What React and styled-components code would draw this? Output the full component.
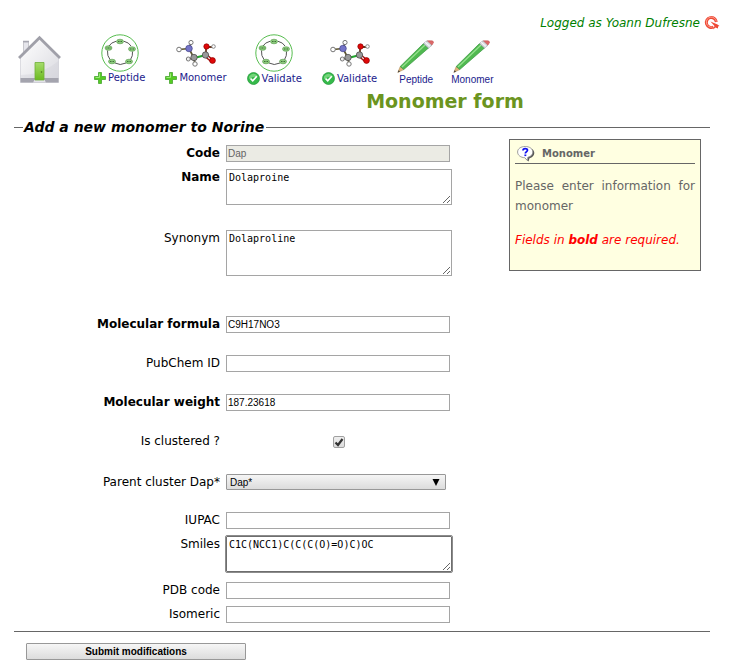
import React from "react";
import styled, { createGlobalStyle } from "styled-components";

const GlobalStyle = createGlobalStyle`
  *, *::before, *::after { box-sizing: border-box; }
  body {
    margin: 0;
    background: #fff;
    color: #000;
    font: 12px/24px "DejaVu Sans", Verdana, sans-serif;
  }
`;

const Page = styled.div`
  padding: 13px 26px 8px 14px;
`;

const UserBar = styled.div`
  display: flex;
  justify-content: flex-end;
  align-items: center;
  gap: 4px;
  height: 20px;
  margin-right: -10px;
  color: #008000;
  font-style: italic;
`;

const IconButton = styled.button`
  display: flex;
  padding: 0;
  border: 0;
  background: none;
  cursor: pointer;
`;

const Nav = styled.nav`
  display: flex;
  align-items: flex-start;
  gap: 20px;
  padding: 1px 3px 0;
`;

const EditLinks = styled.div`
  display: flex;
  gap: 16px;
`;

const HomeLink = styled.a`
  display: flex;
  margin-right: 12px;
  padding-top: 1px;
`;

const NavLink = styled.a`
  display: flex;
  flex-direction: column;
  align-items: center;
  color: #1a1a8c;
  font: 10px/12px ${(p) => (p.$edit ? '"Liberation Sans", Arial' : '"DejaVu Sans", Verdana')}, sans-serif;
  text-decoration: none;
`;

const Figure = styled.span`
  display: flex;
  align-items: ${(p) => (p.$edit ? "flex-end" : "center")};
  height: ${(p) => (p.$edit ? 40 : 38)}px;
`;

const Caption = styled.span`
  display: flex;
  align-items: center;
  gap: 2px;
`;

const Title = styled.h1`
  margin: 4px 0 0;
  padding-left: 166px;
  color: #6b9420;
  font-size: 19px;
  line-height: 22px;
  text-align: center;
`;

const Fieldset = styled.fieldset`
  margin: 5px 0 0;
  padding: 4px 9px 5px 0;
  border: solid #666;
  border-width: 1px 0;
  min-width: 0;
`;

const Legend = styled.legend`
  margin-left: 9px;
  padding: 0 2px 0 1px;
  font-size: 14px;
  font-weight: bold;
  font-style: italic;
  line-height: 20px;
`;

const Columns = styled.div`
  display: flex;
  align-items: flex-start;
  gap: 16px;
`;

const Fields = styled.div`
  flex: 1;
`;

const Row = styled.div`
  display: grid;
  grid-template-columns: 206px 226px;
  column-gap: 6px;
  margin-bottom: ${(p) => p.$after || 0}px;
`;

const Label = styled.label`
  text-align: right;
  font-weight: ${(p) => (p.$required ? "bold" : "normal")};
`;

const TextInput = styled.input`
  width: 224px;
  height: 17px;
  margin-top: 4px;
  padding: 0 1px;
  border: 1px solid #a5a5a5;
  border-radius: 0;
  background: #fff;
  color: #000;
  font: 10px/15px "Liberation Sans", Arial, sans-serif;
  outline: none;

  &:disabled {
    background: #ebebe4;
    color: #646464;
  }
`;

const TextArea = styled.textarea`
  display: block;
  width: 226px;
  height: ${(p) => (p.$tall ? 46 : 36)}px;
  margin-top: 4px;
  padding: 2px;
  border: 1px solid ${(p) => (p.$active ? "#6e6e6e" : "#a5a5a5")};
  border-radius: ${(p) => (p.$active ? 1 : 0)}px;
  outline: ${(p) => (p.$active ? "1px solid #8c8c8c" : "none")};
  color: #000;
  font: 10px/12px "DejaVu Sans Mono", monospace;
  resize: both;
`;

const Checkbox = styled.input`
  appearance: none;
  grid-area: 1 / 1;
  width: 12px;
  height: 12px;
  margin: 0;
  border: 1px solid #a0a0a0;
  border-radius: 2px;
  background: linear-gradient(#efefef, #dcdcdc);

  &:not(:checked) + svg { visibility: hidden; }
`;

const CheckCell = styled.span`
  display: grid;
  place-content: center;
  height: 26px;

  svg { grid-area: 1 / 1; pointer-events: none; }
`;

const SelectBox = styled.span`
  display: grid;
  align-items: center;
  width: 220px;
  height: 16px;
  margin-top: 4px;

  svg {
    grid-area: 1 / 1;
    justify-self: end;
    margin-right: 6px;
    pointer-events: none;
  }
`;

const Select = styled.select`
  appearance: none;
  grid-area: 1 / 1;
  width: 100%;
  height: 16px;
  padding: 1px 3px 0;
  border: 1px solid #989898;
  border-radius: 1px;
  background: linear-gradient(#f5f5f5, #dcdcdc);
  color: #000;
  font: 10px/14px "Liberation Sans", Arial, sans-serif;
`;

const Info = styled.aside`
  width: 192px;
  min-height: 132px;
  margin-top: -2px;
  padding: 5px;
  border: 1px solid #666;
  background: #ffffe1;
  color: #666;
  line-height: 20px;
`;

const InfoTitle = styled.h2`
  display: flex;
  align-items: center;
  gap: 7px;
  height: 19px;
  margin: 0;
  padding-left: 2px;
  border-bottom: 1px solid #666;
  font-size: 10px;
`;

const InfoText = styled.p`
  margin: 12px 0 14px;
  text-align: justify;
`;

const Notice = styled.p`
  margin: 0;
  color: #f00;
  font-style: italic;
  white-space: nowrap;
`;

const Submit = styled.button`
  display: block;
  width: 220px;
  height: 17px;
  margin: 11px 0 0 12px;
  padding: 0;
  border: 1px solid #989898;
  border-radius: 1px;
  background: linear-gradient(#f6f6f6, #dcdcdc);
  color: #000;
  font: bold 10px/15px "Liberation Sans", Arial, sans-serif;
`;

const HomeIcon = () => (
  <svg width="45" height="49" viewBox="0 0 45 49" role="img" aria-label="Home">
    <defs>
      <linearGradient id="wall" x1="0" y1="0" x2="1" y2="1">
        <stop offset="0" stopColor="#fff" />
        <stop offset="1" stopColor="#d9d9df" />
      </linearGradient>
      <linearGradient id="door" x1="0" y1="0" x2="0" y2="1">
        <stop offset="0" stopColor="#a6dc6c" />
        <stop offset="1" stopColor="#6cba20" />
      </linearGradient>
    </defs>
    <path d="M6.500 7h5v14h-5z" fill="#e6e6ec" stroke="#b4b4bc" strokeWidth=".7" />
    <path d="M6 6.500h6" stroke="#a8a8b2" strokeWidth="1.500" />
    <path d="M22.500 3L41.500 22V47.500H3.500V22z" fill="url(#wall)" stroke="#c8c8d0" strokeWidth=".6" />
    <path d="M3.500 43h38v4.500h-38z" fill="#a4a4ae" />
    <path d="M3.500 40c13 0 25-4 38-14v17h-38z" fill="#cfcfd6" opacity=".35" />
    <path d="M2 23L22.500 2.800 43 23" fill="none" stroke="#a0a0a9" strokeWidth="2.800" />
    <path d="M18 44h9l2 3.500H16z" fill="#e2e2e8" />
    <path d="M18 27.500h9v17.500h-9z" fill="url(#door)" stroke="#6fae38" strokeWidth=".8" />
    <circle cx="24.500" cy="37" r=".8" fill="#47701a" />
  </svg>
);

const aminoAcids = [[19, 7.5], [31, 15], [28, 27.5], [11, 27.5], [7.5, 14]];

const PeptideIcon = () => (
  <svg width="38" height="38" viewBox="0 0 38 38" aria-hidden="true">
    <circle cx="19" cy="19" r="18.200" fill="#fff" stroke="#58bd50" strokeWidth="1" />
    <path d="M15 7.300Q10 8.500 8 12M23 7.300Q28 8.500 30 12M31.500 17.500Q32 22 29.500 25.500M6.500 16.500Q6 22 9 25.500M14 29Q19 32 25 29" fill="none" stroke="#555" strokeWidth="1" />
    {aminoAcids.map(([x, y]) => (
      <g key={`${x}-${y}`}>
        <ellipse cx={x} cy={y} rx="3.500" ry="2.300" fill="#8ccb7c" stroke="#56994c" strokeWidth=".6" />
        <path d={`M${x - 2} ${y}h4`} stroke="#3f6f3a" strokeWidth="1" strokeDasharray="1 .5" />
      </g>
    ))}
  </svg>
);

const MoleculeIcon = () => (
  <svg width="40" height="28" viewBox="0 0 40 28" aria-hidden="true">
    <path d="M3 10.500L13 9.500 15 4M13 9.500L18 19 12 20M18 19l1 6" fill="none" stroke="#5d5530" strokeWidth="1.700" />
    <path d="M18 19l12-3" stroke="#22a52c" strokeWidth="2" />
    <path d="M30 15l7 6M28.500 17l7 6" stroke="#a01212" strokeWidth="1.500" />
    <path d="M30 16V8h7" fill="none" stroke="#6b3a22" strokeWidth="1.800" />
    <circle cx="3" cy="10.500" r="2.300" fill="#fff" stroke="#777" />
    <circle cx="15" cy="3.500" r="2.100" fill="#fff" stroke="#777" />
    <circle cx="12.300" cy="20" r="2" fill="#eee" stroke="#777" />
    <circle cx="19" cy="25" r="2.200" fill="#fff" stroke="#777" />
    <circle cx="37.500" cy="7.500" r="1.800" fill="#fff" stroke="#888" />
    <circle cx="13" cy="9.500" r="3.300" fill="#7474c8" stroke="#43438a" strokeWidth=".7" />
    <circle cx="18" cy="18.500" r="3.200" fill="#999" stroke="#444" strokeWidth=".7" />
    <circle cx="29.500" cy="16" r="3.200" fill="#999" stroke="#444" strokeWidth=".7" />
    <circle cx="30.500" cy="7.500" r="2.700" fill="#e00808" stroke="#8e0000" strokeWidth=".7" />
    <circle cx="36.500" cy="21.500" r="2.900" fill="#e00808" stroke="#8e0000" strokeWidth=".7" />
  </svg>
);

const PencilIcon = () => (
  <svg width="38" height="34" viewBox="0 0 38 34" aria-hidden="true">
    <path d="M.8 32.500L3.200 26.500 6.800 29.500z" fill="#dfb57c" stroke="#a88450" strokeWidth=".5" />
    <path d="M.8 32.500l.9-2.200 1.300 1.100z" fill="#333" />
    <path d="M3.200 26.500L26.500 3.500 31.500 8 6.800 29.500z" fill="#50b950" stroke="#399640" strokeWidth=".7" />
    <path d="M5 27L28 5" stroke="#95e18d" strokeWidth="1.300" />
    <path d="M26.500 3.500L30 .8 35 5.200 31.500 8z" fill="#d9dce0" stroke="#9a9fa6" strokeWidth=".7" />
    <path d="M28.200 2.200L33.200 6.600" stroke="#fff" strokeWidth="1" />
    <path d="M30.500 .8h4.300q1.700 0 1.700 1.700L35 5z" fill="#dc6868" stroke="#c65858" strokeWidth=".6" strokeLinejoin="round" />
  </svg>
);

const PlusIcon = () => (
  <svg width="12" height="12" viewBox="0 0 12 12" aria-hidden="true">
    <path d="M4.500.500h3v4h4v3h-4v4h-3v-4h-4v-3h4z" fill="#55cc22" stroke="#48a531" strokeWidth=".8" />
    <path d="M5.500 1.500v4h-4" fill="none" stroke="#9aea77" />
  </svg>
);

const OkIcon = () => (
  <svg width="13" height="13" viewBox="0 0 13 13" aria-hidden="true">
    <circle cx="6.500" cy="6.500" r="6" fill="#35b94a" stroke="#249a3a" strokeWidth=".7" />
    <path d="M2 4.500Q6-1 11 4.500 6 4 2 7z" fill="#8fe08e" opacity=".7" />
    <path d="M3.500 6.500L5.700 8.800 9.800 4.300" fill="none" stroke="#fff" strokeWidth="1.700" />
  </svg>
);

const LogoutIcon = () => (
  <svg width="16" height="16" viewBox="0 0 16 16" aria-hidden="true">
    <path d="M12.300 7A5 5 0 1 0 9.500 12" fill="none" stroke="#ee4935" strokeWidth="3" />
    <path d="M12.300 6.500A5 5 0 1 0 8.500 12" fill="none" stroke="#ffb3a6" strokeWidth=".8" />
    <path d="M6.500 6.500L13.500 9.500 15.500 11 14 11.500 14 13.500 11.500 12.500 9 14.500 10.500 11z" fill="#ee4935" />
  </svg>
);

const HelpIcon = () => (
  <svg width="18" height="16" viewBox="0 0 18 16" aria-hidden="true">
    <path d="M9 1.500c5 0 8.300 2.300 8.300 5.500 0 2.700-2 4.500-4.800 5.200L11.500 15.500 8.500 12.700" fill="#555" />
    <path d="M8.200.500C3.800.500.600 2.700.600 6s3.200 5.600 7.200 5.700l2.800 3.100.2-3.500c3-.7 5-2.500 5-5.200C15.800 2.700 12.600.500 8.200.500z" fill="#fff" stroke="#888" strokeWidth=".8" />
    <path d="M6 4.500C6 2 10.500 2 10.500 4.300 10.500 5.800 8.300 5.700 8.300 7.500" fill="none" stroke="#11e" strokeWidth="1.700" />
    <path d="M7.400 8.500h1.900v1.600H7.400z" fill="#11e" />
  </svg>
);

const links = [
  { text: "Peptide", figure: PeptideIcon, mark: PlusIcon },
  { text: "Monomer", figure: MoleculeIcon, mark: PlusIcon },
  { text: "Validate", figure: PeptideIcon, mark: OkIcon },
  { text: "Validate", figure: MoleculeIcon, mark: OkIcon },
];

function Field({ id, label, required, after, children }) {
  return (
    <Row $after={after}>
      <Label htmlFor={id} $required={required}>{label}</Label>
      {children}
    </Row>
  );
}

export default function App() {
  return (
    <>
      <GlobalStyle />
      <Page>
        <UserBar>
          <span>Logged as Yoann Dufresne</span>
          <IconButton type="button" aria-label="Log out"><LogoutIcon /></IconButton>
        </UserBar>
        <Nav>
          <HomeLink href="#home"><HomeIcon /></HomeLink>
          {links.map(({ text, figure: Drawing, mark: Mark }, i) => (
            <NavLink key={i} href={`#${text.toLowerCase()}`}>
              <Figure><Drawing /></Figure>
              <Caption><Mark />{text}</Caption>
            </NavLink>
          ))}
          <EditLinks>
            {["Peptide", "Monomer"].map((text) => (
              <NavLink key={text} href={`#edit-${text.toLowerCase()}`} $edit>
                <Figure $edit><PencilIcon /></Figure>
                <Caption>{text}</Caption>
              </NavLink>
            ))}
          </EditLinks>
        </Nav>
        <Title>Monomer form</Title>
        <form onSubmit={(e) => e.preventDefault()}>
          <Fieldset>
            <Legend>Add a new monomer to Norine</Legend>
            <Columns>
              <Fields>
                <Field id="code" label="Code" required>
                  <TextInput id="code" defaultValue="Dap" disabled />
                </Field>
                <Field id="name" label="Name" required after={21}>
                  <TextArea id="name" defaultValue="Dolaproine" spellCheck={false} />
                </Field>
                <Field id="synonym" label="Synonym" after={36}>
                  <TextArea id="synonym" $tall defaultValue="Dolaproline" spellCheck={false} />
                </Field>
                <Field id="formula" label="Molecular formula" required after={15}>
                  <TextInput id="formula" defaultValue="C9H17NO3" />
                </Field>
                <Field id="pubchem" label="PubChem ID" after={15}>
                  <TextInput id="pubchem" />
                </Field>
                <Field id="weight" label="Molecular weight" required after={15}>
                  <TextInput id="weight" defaultValue="187.23618" />
                </Field>
                <Field id="clustered" label="Is clustered ?" after={15}>
                  <CheckCell>
                    <Checkbox id="clustered" type="checkbox" defaultChecked />
                    <svg width="12" height="12" viewBox="0 0 12 12" aria-hidden="true">
                      <path d="M2.500 6.500L5 9 9.500 3" fill="none" stroke="#333" strokeWidth="2.200" />
                    </svg>
                  </CheckCell>
                </Field>
                <Field id="parent" label="Parent cluster Dap*" after={14}>
                  <SelectBox>
                    <Select id="parent" defaultValue="Dap*"><option>Dap*</option></Select>
                    <svg width="8" height="7" viewBox="0 0 8 7" aria-hidden="true">
                      <path d="M.5 0h7L4 7z" fill="#000" />
                    </svg>
                  </SelectBox>
                </Field>
                <Field id="iupac" label="IUPAC">
                  <TextInput id="iupac" />
                </Field>
                <Field id="smiles" label="Smiles" after={6}>
                  <TextArea id="smiles" $active defaultValue="C1C(NCC1)C(C(C(O)=O)C)OC" spellCheck={false} />
                </Field>
                <Field id="pdb" label="PDB code">
                  <TextInput id="pdb" />
                </Field>
                <Field id="isomeric" label="Isomeric">
                  <TextInput id="isomeric" />
                </Field>
              </Fields>
              <Info>
                <InfoTitle><HelpIcon />Monomer</InfoTitle>
                <InfoText>Please enter information for monomer</InfoText>
                <Notice>Fields in <b>bold</b> are required.</Notice>
              </Info>
            </Columns>
          </Fieldset>
          <Submit type="submit">Submit modifications</Submit>
        </form>
      </Page>
    </>
  );
}
